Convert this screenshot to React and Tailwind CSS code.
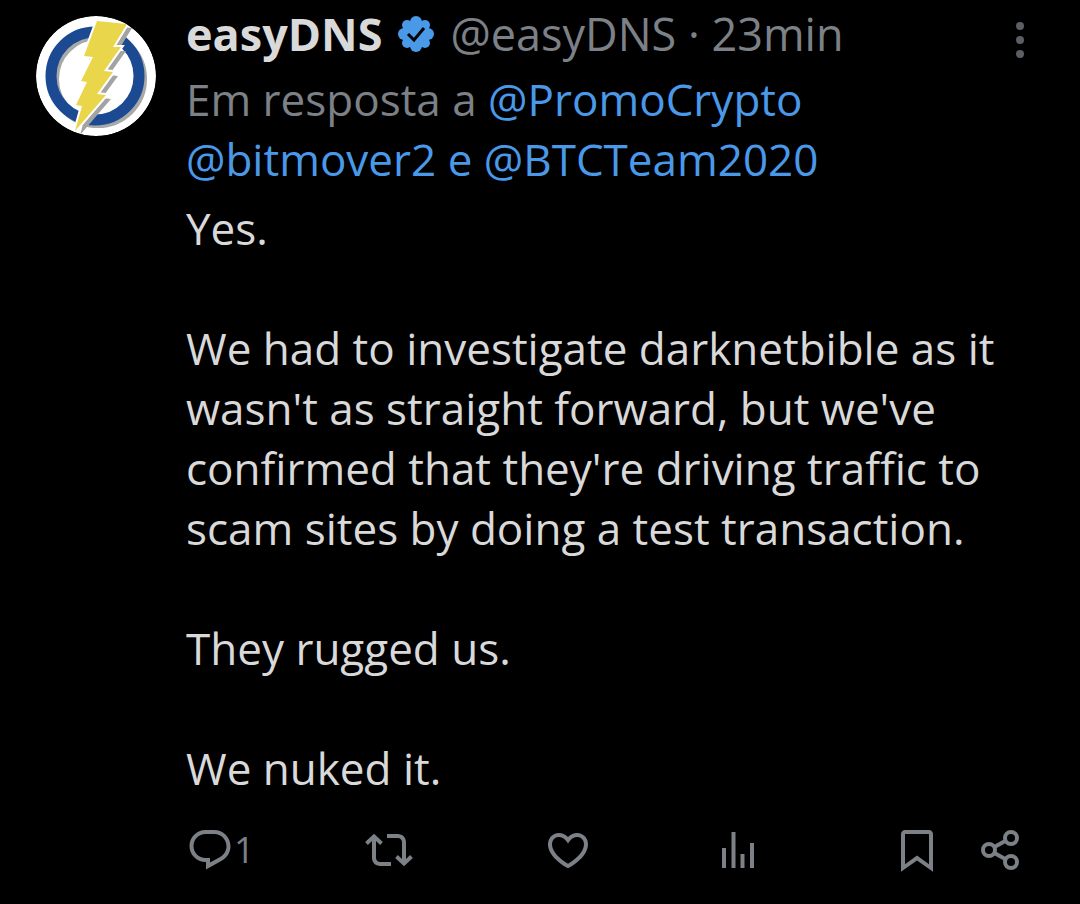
const body = [
    "Yes.",
    "We had to investigate darknetbible as it wasn't as straight forward, but we've confirmed that they're driving traffic to scam sites by doing a test transaction.",
    "They rugged us.",
    "We nuked it.",
];

const Icon = ({ children }) => (
    <svg viewBox="0 0 24 24" className="w-12 h-12 shrink-0 fill-current" aria-hidden="true">
        {children}
    </svg>
);

const actions = [
    {
        label: "Responder",
        count: 1,
        icon: <path d="M1.751 10c0-4.42 3.584-8 8.005-8h4.366c4.49 0 8.129 3.64 8.129 8.13 0 2.96-1.607 5.68-4.196 7.11l-8.054 4.46v-3.69h-.067c-4.49.1-8.183-3.51-8.183-8.01zm8.005-6c-3.317 0-6.005 2.69-6.005 6 0 3.37 2.77 6.08 6.138 6.01l.351-.01h1.761v2.3l5.087-2.81c1.951-1.08 3.163-3.13 3.163-5.36 0-3.39-2.744-6.13-6.129-6.13H9.756z" />,
    },
    {
        label: "Repostar",
        icon: <path d="M4.5 3.88l4.432 4.14-1.364 1.46L5.5 7.55V16c0 1.1.896 2 2 2H13v2H7.5c-2.209 0-4-1.79-4-4V7.55L1.432 9.48.068 8.02 4.5 3.88zM16.5 6H11V4h5.5c2.209 0 4 1.79 4 4v8.45l2.068-1.93 1.364 1.46-4.432 4.14-4.432-4.14 1.364-1.46 2.068 1.93V8c0-1.1-.896-2-2-2z" />,
    },
    {
        label: "Curtir",
        icon: <path d="M16.697 5.5c-1.222-.06-2.679.51-3.89 2.16l-.805 1.09-.806-1.09C9.984 6.01 8.526 5.44 7.304 5.5c-1.243.07-2.349.78-2.91 1.91-.552 1.12-.633 2.78.479 4.82 1.074 1.97 3.257 4.27 7.129 6.61 3.87-2.34 6.052-4.64 7.126-6.61 1.111-2.04 1.03-3.7.477-4.82-.561-1.13-1.666-1.84-2.908-1.91zm4.187 7.69c-1.351 2.48-4.001 5.12-8.379 7.67l-.503.3-.504-.3c-4.379-2.55-7.029-5.19-8.382-7.67-1.36-2.5-1.41-4.86-.514-6.67.887-1.79 2.647-2.91 4.601-3.01 1.651-.09 3.368.56 4.798 2.01 1.429-1.45 3.146-2.1 4.796-2.01 1.954.1 3.714 1.22 4.601 3.01.896 1.81.846 4.17-.514 6.67z" />,
    },
    {
        label: "Visualizações",
        icon: <path d="M8.75 21V3h2v18h-2zM18 21V8.5h2V21h-2zM4 21V11h2v10H4zm9.25 0v-7h2v7h-2z" />,
    },
    {
        label: "Salvar",
        icon: <path d="M4 4C4 2.9 4.9 2 6 2H18C19.1 2 20 2.9 20 4V22.9L12 17.2 4 22.9V4ZM6 4V19.1L12 14.8 18 19.1V4H6Z" fillRule="evenodd" />,
    },
    {
        label: "Compartilhar",
        icon: (
            <g fill="none" stroke="currentColor" strokeWidth="2">
                <circle cx="6.5" cy="12" r="3" />
                <circle cx="17.5" cy="6" r="3" />
                <circle cx="17.5" cy="18" r="3" />
                <path d="M9.2 10.5L14.8 7.4M9.2 13.5L14.8 16.6" />
            </g>
        ),
    },
];

function Avatar() {
    const bolt = "M61 5L91 8 77 31 85 31 68 55 77 56 61 78 70 79 39 115 46 90 40 89 51 66 45 65 57 41 48 40Z";

    return (
        <svg viewBox="0 0 120 120" className="w-full rounded-full" role="img" aria-label="easyDNS">
            <circle cx="60" cy="60" r="60" fill="#fff" />
            <circle cx="62" cy="63" r="44" fill="none" stroke="#a8a8a8" strokeWidth="10" />
            <circle cx="59" cy="60" r="44" fill="none" stroke="#1b4a93" strokeWidth="11" />
            <path d={bolt} fill="#a3a3a3" transform="translate(5 4)" />
            <path d={bolt} fill="#ead64a" stroke="#fff" strokeWidth="4" paintOrder="stroke" />
        </svg>
    );
}

function VerifiedBadge() {
    return (
        <svg viewBox="0 0 36 36" className="w-9 h-9 shrink-0" role="img" aria-label="Conta verificada">
            <g fill="#4a99e9">
                <circle cx="18" cy="18" r="14" />
                <circle cx="18" cy="6" r="6" />
                <circle cx="27" cy="9" r="5" />
                <circle cx="30" cy="18" r="6" />
                <circle cx="27" cy="27" r="5" />
                <circle cx="18" cy="30" r="6" />
                <circle cx="9" cy="27" r="5" />
                <circle cx="6" cy="18" r="6" />
                <circle cx="9" cy="9" r="5" />
            </g>
            <path d="M10 18L16 24 26 12" fill="none" stroke="#000" strokeWidth="3" />
        </svg>
    );
}

const Mention = ({ name }) => (
    <a href={`#${name}`} className="text-[#4a99e9]">@{name}</a>
);

export default function App() {
    return (
        <main className="min-h-screen bg-black font-['Open_Sans',sans-serif] text-[44px] leading-[60px] text-[#d9d9d9]">
            <article className="flex gap-[30px] pl-9 pr-14">
                <a href="#easyDNS" className="mt-4 w-[120px] shrink-0">
                    <Avatar />
                </a>
                <div className="min-w-0 flex-1">
                    <header className="flex items-center pt-1 text-[45px]">
                        <a href="#easyDNS" className="font-bold">easyDNS</a>
                        <span className="mx-4"><VerifiedBadge /></span>
                        <span className="whitespace-nowrap text-[#7c8087]">@easyDNS · 23min</span>
                        <button type="button" aria-label="Mais opções" className="ml-auto mt-3">
                            <svg viewBox="0 0 8 36" className="h-9 w-2 fill-[#5b5e62]">
                                <circle cx="4" cy="4" r="4" />
                                <circle cx="4" cy="18" r="4" />
                                <circle cx="4" cy="32" r="4" />
                            </svg>
                        </button>
                    </header>

                    <p className="mt-[5px] text-[#7c8087]">
                        Em resposta a <Mention name="PromoCrypto" />
                        <br />
                        <Mention name="bitmover2" /> <span className="text-[#4a99e9]">e</span> <Mention name="BTCTeam2020" />
                    </p>

                    <div className="mt-[9px] flex flex-col gap-[60px]">
                        {body.map((text) => <p key={text}>{text}</p>)}
                    </div>

                    <footer className="mt-7 grid grid-cols-[179fr_179fr_170fr_179fr_83fr_48fr] text-[#7c8087]">
                        {actions.map(({ label, count, icon }) => (
                            <button key={label} type="button" aria-label={label} className="flex h-12 items-center">
                                <Icon>{icon}</Icon>
                                {count && <span className="text-4xl">{count}</span>}
                            </button>
                        ))}
                    </footer>
                </div>
            </article>
        </main>
    );
}
